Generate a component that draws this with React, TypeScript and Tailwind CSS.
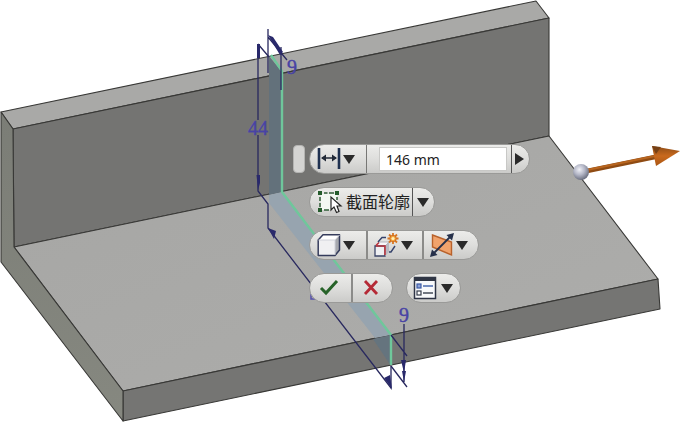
import type { ReactNode } from "react";

function Caret() {
  return (
    <svg viewBox="0 0 12 9" className="h-[9px] w-3 shrink-0" aria-hidden="true">
      <path d="M0 0H12L6 9Z" fill="#2a2a2a" />
    </svg>
  );
}

function Pill({ children, label }: { children: ReactNode; label: string }) {
  return (
    <div
      role="group"
      aria-label={label}
      className="flex h-[30px] w-fit overflow-hidden rounded-full border border-[#9a9a98] bg-linear-to-b from-[#ececea] via-[#dededc] to-[#cbcbc9]"
    >
      {children}
    </div>
  );
}

function Segment({ label, children, className }: { label: string; children: ReactNode; className: string }) {
  return (
    <button type="button" aria-label={label} className={`flex h-full shrink-0 items-center ${className}`}>
      {children}
    </button>
  );
}

function DistanceIcon() {
  return (
    <svg viewBox="0 0 24 24" className="size-6 shrink-0" aria-hidden="true">
      <path d="M2 1V22M22 1V22" stroke="#1f3150" strokeWidth="2.6" />
      <path d="M5 11H19" stroke="#222a38" strokeWidth="1.5" />
      <path d="M4 11L9 7.5V14.5ZM20 11L15 7.5V14.5Z" fill="#222a38" />
    </svg>
  );
}

function ProfileIcon() {
  return (
    <svg viewBox="0 0 26 24" className="h-6 w-[26px] shrink-0" aria-hidden="true">
      <rect x="4" y="4" width="16" height="16" fill="#f3f8f2" />
      <path d="M7 3H10.500M12 3H17M7 20H12M3 7V11M3 13V17M20 7V10" stroke="#315e37" strokeWidth="1.5" />
      <path d="M1 1h4v4H1zM18 1h4v4h-4zM1 18h4v4H1z" fill="#245b2b" />
      <path d="M14 7V20L17 17L19.5 22.5L22 21.5L20 16H24Z" fill="#fff" stroke="#252525" strokeWidth="1.2" />
    </svg>
  );
}

function CubeIcon() {
  return (
    <svg viewBox="0 0 24 24" className="size-6 shrink-0" aria-hidden="true">
      <path d="M1 7L6 1.5H23L18 7Z" fill="#fff" />
      <path d="M1 7H18V22.5H1Z" fill="#f0f0f2" />
      <path d="M18 7L23 1.5V17L18 22.5Z" fill="#a6a8ae" />
      <path d="M1.2 7L6 1.8H22.5V17L18 22.5H1.2Z" fill="none" stroke="#353c5c" strokeWidth="1.5" strokeLinejoin="round" />
      <path d="M1.5 7H18V22M18 7L22.5 2" fill="none" stroke="#d0d2da" strokeWidth="1" />
    </svg>
  );
}

function NewSolidIcon() {
  return (
    <svg viewBox="0 0 25 24" className="h-6 w-[25px] shrink-0" aria-hidden="true">
      <path d="M1 13L5 9H15L11 13Z" fill="#f6f6f8" stroke="#a5a8b2" strokeWidth=".8" />
      <path d="M1 13H11V23H1Z" fill="#eeeff2" stroke="#3b4467" strokeWidth="1.3" />
      <path d="M11 13L15 9V19L11 23Z" fill="#b7bac2" />
      <path d="M2 12.5L5 9.500M2 13H11V22" fill="none" stroke="#bd3840" strokeWidth="1.6" />
      <path d="M4 9L8 4.5H12M15 19H17L21 13" fill="none" stroke="#35426b" strokeWidth="1.4" />
      <path d="M19 0V11M13.5 5.5H24.500M15 1.5L23 9.500M23 1.5L15 9.500" stroke="#d87723" strokeWidth="1.8" />
      <circle cx="19" cy="5.5" r="3.2" fill="#f2a33c" stroke="#c9641c" strokeWidth=".8" />
      <circle cx="19" cy="5.5" r="1.6" fill="#fff1b5" />
    </svg>
  );
}

function DirectionIcon() {
  return (
    <svg viewBox="0 0 24 24" className="size-6 shrink-0" aria-hidden="true">
      <path d="M2.500 2L21.5 9V22L2.500 14Z" fill="#f1a36c" stroke="#b8622c" strokeWidth="1.4" />
      <path d="M3 21L21 3" stroke="#26304a" strokeWidth="1.8" />
      <path d="M24 0L16.500 2L22 7.500ZM0 24L2 16.500L7.500 22Z" fill="#26304a" />
    </svg>
  );
}

function OptionsIcon() {
  return (
    <svg viewBox="0 0 24 24" className="size-6 shrink-0" aria-hidden="true">
      <rect x="1.5" y="1.5" width="21" height="21" fill="#f8f9fb" stroke="#2e3446" strokeWidth="1.5" />
      <path d="M1 1H23V5H1Z" fill="#303645" />
      <rect x="4" y="8" width="4" height="4" fill="#8da2d8" stroke="#3d5ba5" strokeWidth="1.2" />
      <rect x="4" y="15" width="4" height="4" fill="#fff" stroke="#363d4c" strokeWidth="1.2" />
      <path d="M10 10H20" stroke="#4867ad" strokeWidth="1.4" />
      <path d="M10 17H20" stroke="#454b58" strokeWidth="1.4" />
    </svg>
  );
}

function Model() {
  return (
    <svg viewBox="0 0 680 423" className="block h-[423px] w-[680px] max-w-none" role="img" aria-label="拉伸模型">
      <defs>
        <linearGradient id="floor" x1="0" y1="0" x2="1" y2="1">
          <stop offset="0" stopColor="#a6a6a4" />
          <stop offset="1" stopColor="#adadab" />
        </linearGradient>
        <linearGradient id="side" x1="0" y1="0" x2="0" y2="1">
          <stop offset="0" stopColor="#7b7d76" />
          <stop offset="1" stopColor="#868880" />
        </linearGradient>
        <radialGradient id="ball" cx=".4" cy=".35" r=".65">
          <stop offset="0" stopColor="#f0f1f7" />
          <stop offset=".5" stopColor="#b5b8c8" />
          <stop offset="1" stopColor="#6c7081" />
        </radialGradient>
        <linearGradient id="cone" x1="0" y1="0" x2="0" y2="1">
          <stop offset="0" stopColor="#8d4c17" />
          <stop offset=".5" stopColor="#c9691d" />
          <stop offset="1" stopColor="#a95614" />
        </linearGradient>
      </defs>
      <g stroke="#383836" strokeWidth="1.1" strokeLinejoin="round">
        <path d="M1 112L536 1L549 18L13 129Z" fill="#a9a9a7" />
        <path d="M13 129L549 18V136L14 247Z" fill="#747472" />
        <path d="M14 247L549 136L658 279L123 391Z" fill="url(#floor)" />
        <path d="M123 391L658 279L660 309L123 421Z" fill="#757573" />
        <path d="M1 112L13 129L14 247L123 391V421L1 262Z" fill="url(#side)" />
      </g>
      <path d="M269 56L282 72V192L269 195Z" fill="#63717b" />
      <path d="M269 195L282 192L391 335L375 338L269 203Z" fill="#97a4af" />
      <path d="M373 339L391 335V366Z" fill="#65747e" />
      <path d="M271 55L282 71V192L391 335V365" fill="none" stroke="#6fc79b" strokeWidth="2.4" />
      <g fill="none" stroke="#29295f" strokeWidth="1.3">
        <path d="M258 44V120M258 135V191L268 204V228L391 388V366M258 44L269 57" />
        <path d="M268 29V73M281 47V90M268 37L287 60" />
        <path d="M391 335L407 356M391 366L407 387M404 324V382" />
      </g>
      <path
        d="M257 44h3v14h-3zM256.500 175h3.500v8l-2 7zM268 35l5 2 10 15-3 3zM268 228l8 3-2 8zM384 378l6-3 2 14zM401 360h5l-2 13zM402 371h4l-2 11z"
        fill="#29296b"
      />
      <path d="M311 292V299H316" fill="none" stroke="#5650aa" strokeWidth="1.5" />
      <g fill="#4843a5" stroke="#4843a5" strokeWidth=".4" fontFamily="'Liberation Serif', serif" fontSize="20">
        <text x="248" y="135">44</text>
        <text x="287" y="74">9</text>
        <text x="399" y="322">9</text>
      </g>
      <path d="M587 171L655 157" stroke="#8f4b13" strokeWidth="4.5" />
      <path d="M587 170L655 156" stroke="#b8651f" strokeWidth="2" />
      <path d="M652 146L680 151L656 166Z" fill="url(#cone)" />
      <path d="M652 146L661 147L656 154Z" fill="#764015" />
      <circle cx="581" cy="172" r="8" fill="url(#ball)" />
    </svg>
  );
}

export default function App() {
  return (
    <main className="relative min-h-screen overflow-hidden bg-white font-['Noto_Sans','Noto_Sans_CJK_SC',sans-serif] text-[#222222]">
      <Model />
      <form
        aria-label="拉伸"
        onSubmit={(event) => event.preventDefault()}
        className="absolute top-36 left-[293px] flex gap-1"
      >
        <div className="mt-px h-7 w-3 rounded-sm border border-[#b4b4b2] bg-[#d4d4d2]" />
        <div className="flex flex-col gap-[13px]">
          <Pill label="距离">
            <Segment label="距离类型" className="w-14 gap-[2px] pl-[7px]">
              <DistanceIcon />
              <Caret />
            </Segment>
            <div className="flex items-center border-x border-[#555555] border-l-[#777775] py-[3px] pr-1 pl-3">
              <input
                aria-label="距离值"
                defaultValue="146 mm"
                className="h-6 w-32 border border-[#c8c8c6] bg-white px-[6px] text-sm outline-none"
              />
            </div>
            <Segment label="更多" className="w-[17px] pl-[3px]">
              <svg viewBox="0 0 9 12" className="h-3 w-[9px]" aria-hidden="true">
                <path d="M0 0L9 6L0 12Z" fill="#2a2a2a" />
              </svg>
            </Segment>
          </Pill>
          <Pill label="轮廓">
            <Segment label="截面轮廓" className="gap-[3px] pr-[2px] pl-[7px]">
              <ProfileIcon />
              <span className="text-base leading-6">截面轮廓</span>
            </Segment>
            <Segment label="轮廓选项" className="w-[22px] border-l border-[#555555] pl-[4px]">
              <Caret />
            </Segment>
          </Pill>
          <Pill label="特征">
            <Segment label="输出" className="w-14 gap-[2px] pl-[7px]">
              <CubeIcon />
              <Caret />
            </Segment>
            <Segment label="新建实体" className="w-14 gap-[2px] border-l-2 border-[#8b8b89] pl-[6px]">
              <NewSolidIcon />
              <Caret />
            </Segment>
            <Segment label="方向" className="w-14 gap-[2px] border-l-2 border-[#8b8b89] pl-[6px]">
              <DirectionIcon />
              <Caret />
            </Segment>
          </Pill>
          <div className="flex gap-[13px]">
            <Pill label="确认">
              <Segment label="确定" className="w-[41px] pl-[9px]">
                <svg viewBox="0 0 20 16" className="h-4 w-5" aria-hidden="true">
                  <path d="M2 8L7 13L18 1" fill="none" stroke="#276329" strokeWidth="3" />
                </svg>
              </Segment>
              <Segment label="取消" className="w-[41px] border-l-2 border-[#8b8b89] pl-[10px]">
                <svg viewBox="0 0 16 16" className="size-4" aria-hidden="true">
                  <path d="M2 1L14 14M14 1L2 14" stroke="#b52a36" strokeWidth="2.8" />
                </svg>
              </Segment>
            </Pill>
            <Pill label="选项">
              <Segment label="选项菜单" className="w-[53px] gap-1 pl-[6px]">
                <OptionsIcon />
                <Caret />
              </Segment>
            </Pill>
          </div>
        </div>
      </form>
    </main>
  );
}
